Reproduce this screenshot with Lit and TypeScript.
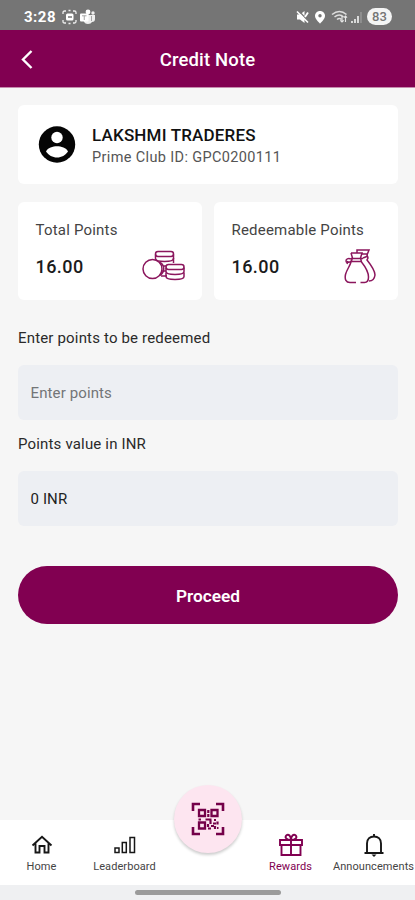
import { LitElement, html, css, svg } from "lit";
import { customElement } from "lit/decorators.js";

const coin = (x: number, y: number, rows: number) => svg`
  <rect x=${x} y=${y} width="18" height="5" rx="2.500"/>
  ${Array.from({ length: rows }, (_, i) => svg`
    <path d="M${x} ${y + 3 + i * 5}v4c0 4 18 4 18 0v-4"/>`)}`;

@customElement("app-root")
export class AppRoot extends LitElement {
  static styles = css`
    :host {
      display: flex;
      flex-direction: column;
      width: 415px;
      height: 900px;
      background: #f6f6f6;
      font-family: Roboto, sans-serif;
      color: #222;
      overflow: hidden;
    }
    * { box-sizing: border-box; }
    svg { display: block; fill: none; flex: none; }
    .status {
      height: 30px;
      flex: none;
      background: #757575;
      color: #fff;
      display: flex;
      align-items: center;
      padding: 3px 23px 0 24px;
    }
    .time { font-size: 15px; font-weight: 700; line-height: 20px; width: 38px; letter-spacing: 0.5px; }
    .right { margin-left: auto; display: flex; align-items: center; }
    .battery {
      width: 25px;
      height: 17px;
      border-radius: 9px;
      background: #f4f4f4;
      color: #757575;
      font-size: 13px;
      font-weight: 500;
      line-height: 18px;
      text-align: center;
      margin-left: 5px;
    }
    .header {
      height: 58px;
      flex: none;
      background: #810051;
      border-bottom: 1px solid #c58bae;
      display: grid;
      grid-template-columns: 60px 1fr 60px;
      align-items: center;
      color: #fff;
    }
    .title { text-align: center; font-size: 18.5px; font-weight: 500; line-height: 24px; padding-top: 3px; letter-spacing: 0.15px; }
    .main { flex: 1; padding: 17px 17px 0 18px; }
    .card { background: #fff; border-radius: 6px; }
    .profile { height: 79px; display: flex; align-items: center; padding-left: 20px; gap: 16px; }
    .identity { padding-top: 3px; }
    .name { font-size: 17px; font-weight: 500; line-height: 22px; color: #111; letter-spacing: 0.18px; }
    .club { font-size: 14.5px; line-height: 22px; color: #555; letter-spacing: 0.36px; position: relative; top: 0.5px; }
    .points { display: grid; grid-template-columns: 184px 184px; justify-content: space-between; margin-top: 18px; }
    .stat { height: 98px; padding: 18px 17px 0 17.5px; }
    .label { font-size: 15px; line-height: 20px; color: #444; letter-spacing: 0.2px; white-space: nowrap; }
    .row { display: flex; justify-content: space-between; align-items: center; height: 34px; margin-top: 10px; }
    .value { font-size: 18px; font-weight: 500; line-height: 24px; letter-spacing: 0.45px; color: #1b1b1b; }
    .field-label { font-size: 15px; line-height: 20px; letter-spacing: 0.17px; color: #2a2a2a; }
    .first { margin-top: 28px; }
    .second { margin-top: 14px; }
    .field {
      height: 55px;
      border-radius: 6px;
      background: #edeff3;
      margin-top: 17px;
      padding: 1px 12px 0 12.5px;
      display: flex;
      align-items: center;
      font-size: 15px;
      letter-spacing: 0.12px;
    }
    .placeholder { color: #737577; }
    .proceed {
      height: 58px;
      border-radius: 29px;
      background: #810051;
      color: #fff;
      display: flex;
      align-items: center;
      justify-content: center;
      margin-top: 40px;
      padding-top: 1px;
      font-size: 17.3px;
      font-weight: 600;
    }
    .nav {
      height: 65px;
      flex: none;
      background: #fff;
      display: grid;
      grid-template-columns: repeat(5, 83px);
      color: #171717;
    }
    .tab { display: flex; flex-direction: column; align-items: center; padding-top: 13px; min-width: 0; }
    .tab-label { font-size: 11px; line-height: 16px; margin-top: 2px; white-space: nowrap; letter-spacing: 0.08px; color: #444; }
    .active { color: #810051; }
    .active .tab-label { color: #810051; }
    .scan {
      width: 68px;
      height: 68px;
      margin: -35px auto 0;
      border-radius: 50%;
      background: #fde5f0;
      box-shadow: 0 2px 3px #0003;
      display: flex;
      align-items: center;
      justify-content: center;
    }
    .gesture { height: 15px; flex: none; background: #eff0f2; padding-top: 5px; }
    .handle { width: 146px; height: 5px; border-radius: 3px; background: #9b9b9b; margin: 0 auto; }
  `;

  render() {
    return html`
      <div class="status">
        <span class="time">3:28</span>
        <svg width="35" height="16" viewBox="0 0 35 16">
          <path d="M1 5V3.500Q1 2 2.500 2H4M11 2h1.500Q14 2 14 3.500V5M14 11v1.500Q14 14 12.500 14H11M4 14H2.500Q1 14 1 12.500V11M6.500 1.500h2M6.500 14.500h2" stroke="#eee" stroke-width="1.300"/>
          <rect x="4" y="4.500" width="7.500" height="7" rx="1.500" fill="#fff"/>
          <path d="M6 8h4" stroke="#757575" stroke-width="1.500"/>
          <circle cx="26" cy="3" r="2.400" fill="#fff"/>
          <circle cx="31" cy="4" r="1.700" fill="#eee"/>
          <path d="M22 6h11v4q0 3-3 3-1 2-4 2-3.500 0-4.500-3.500z" fill="#eee"/>
          <rect x="18" y="4.500" width="8.500" height="8" rx="1" fill="#fff"/>
          <path d="M20 6.800h4.500M22.250 6.800V11M29.500 7v5" stroke="#a5a5a5" stroke-width="1"/>
        </svg>
        <div class="right">
          <svg width="66" height="16" viewBox="0 0 66 16">
            <path d="M1 5.500h3L8.500 2v12L4 10.500H1z" fill="#fff"/>
            <path d="M2 1l11 12" stroke="#757575" stroke-width="1.500"/>
            <path d="M1 2.500l11 11" stroke="#fff" stroke-width="1.600"/>
            <path d="M9 8l3-4.500" stroke="#fff" stroke-width="1.800"/>
            <path d="M24 2c-3 0-5 2.200-5 4.900C19 10 24 14.500 24 14.500S29 10 29 6.900C29 4.200 27 2 24 2z" fill="#fff"/>
            <circle cx="24" cy="6.800" r="1.700" fill="#757575"/>
            <path d="M36 5.500q7.500-6 14.500 0M38.500 8q5-4 9 0M41 10.500q2.500-2 4.500 0" stroke="#ddd" stroke-width="1.600"/>
            <path d="M46 7v6M44.300 11.300L46 13l1.700-1.700M49.500 13V7M47.800 8.700L49.500 7l1.500 1.700" stroke="#e8e8e8" stroke-width="1.100"/>
            <path d="M56 14v-2M59 14v-4M62 14V7" stroke="#e5e5e5" stroke-width="1.800"/>
            <path d="M65 14V3" stroke="#999" stroke-width="1.400"/>
          </svg>
          <div class="battery">83</div>
        </div>
      </div>

      <div class="header">
        <svg width="60" height="28" viewBox="0 0 60 28">
          <path d="M31.500 6L23 14.500l8.500 8.500" stroke="#fff" stroke-width="2.400"/>
        </svg>
        <div class="title">Credit Note</div>
      </div>

      <div class="main">
        <div class="card profile">
          <svg width="38" height="38" viewBox="0 0 38 38">
            <circle cx="19" cy="18.500" r="18.200" fill="#050505"/>
            <circle cx="19" cy="11.500" r="5.700" fill="#fff"/>
            <path d="M8 25.500c1.500-3.800 7-5.300 11-5.300S28.500 21.700 30 25.500c-2.500 3.800-6.500 6-11 6S10.500 29.300 8 25.500z" fill="#fff"/>
          </svg>
          <div class="identity">
            <div class="name">LAKSHMI TRADERES</div>
            <div class="club">Prime Club ID: GPC0200111</div>
          </div>
        </div>

        <div class="points">
          <div class="card stat">
            <div class="label">Total Points</div>
            <div class="row">
              <div class="value">16.00</div>
              <svg width="43" height="34" viewBox="0 0 43 34" stroke="#8b165d" stroke-width="1.500">
                ${coin(13.5, 1.5, 1)}
                <path d="M31.500 8v5"/>
                <circle cx="10.500" cy="19" r="9.500" fill="#fff"/>
                <path d="M18 12.500c5 3 5 9 0 13M21 16h3"/>
                ${coin(24, 14.5, 2)}
                <path d="M20 21h4M19 26h6"/>
              </svg>
            </div>
          </div>
          <div class="card stat">
            <div class="label">Redeemable Points</div>
            <div class="row">
              <div class="value">16.00</div>
              <svg width="37" height="38" viewBox="1 0 37 38" stroke="#8b165d" stroke-width="1.500">
                <path d="M14 5V2h12l-2 5 1 3-1 2c4 5 8 10 8 15-.5 4-3 6-6 6"/>
                <path d="M8 5h11l-1.500 5 1 4c4 5 7 9 7 15 0 4-2 5.500-4 5.500h-4M13 34.500H7c-4 0-5.500-3-4.500-8C3.500 22 7 18 8 14l1.500-4L8 5M8 10.500h12M8 13.500h11M8 11c-3-1-5 0-5 2s3 2 5 0M5 13l-1 3M18 6h7M20 10l5-2"/>
              </svg>
            </div>
          </div>
        </div>

        <div class="field-label first">Enter points to be redeemed</div>
        <div class="field placeholder">Enter points</div>
        <div class="field-label second">Points value in INR</div>
        <div class="field">0 INR</div>
        <div class="proceed">Proceed</div>
      </div>

      <div class="nav">
        <div class="tab">
          <svg width="24" height="24" viewBox="0 0 24 24" stroke="currentColor" stroke-width="1.900">
            <path d="M2.500 12.500L12 3.800l9.500 8.700M5.500 10.500v9h4V13h5v6.500h4v-9"/>
          </svg>
          <div class="tab-label">Home</div>
        </div>
        <div class="tab">
          <svg width="24" height="24" viewBox="0 0 24 24" stroke="currentColor" stroke-width="1.500">
            <rect x="2" y="15" width="4" height="4.500"/>
            <rect x="9.300" y="9.500" width="4" height="10"/>
            <rect x="17" y="4.500" width="4.500" height="15"/>
          </svg>
          <div class="tab-label">Leaderboard</div>
        </div>
        <div>
          <div class="scan">
            <svg width="34" height="34" viewBox="0 0 34 34" stroke="#740049">
              <path d="M2 9V2h7M25 2h7v7M32 25v7h-7M9 32H2v-7" stroke-width="2.600"/>
              <path d="M8 8h6v6H8zM20.500 8h6v6h-6zM8 20.500h6v6H8z" stroke-width="2.300"/>
              <path d="M17.300 8v3M17.300 12v3M14.500 17.500h6M7.500 17.500h2.500M19.500 18v4M23 18h2M26.500 19.500v3M17 22v3M22 21.500h3M20 24h3M17 26.500h3M24 24v3M26 26h1.500" stroke-width="2.200"/>
            </svg>
          </div>
        </div>
        <div class="tab active">
          <svg width="26" height="24" viewBox="0 0 26 24" stroke="currentColor" stroke-width="1.900">
            <path d="M2 7h22v5H2zM3.500 12v10h19V12M13 7v15M13 7C8 7 6.500 4 8.500 2.300S13 3 13 7c0-4 2.500-6.500 4.500-4.700S18 7 13 7z"/>
          </svg>
          <div class="tab-label">Rewards</div>
        </div>
        <div class="tab">
          <svg width="24" height="24" viewBox="0 0 24 24" stroke="currentColor" stroke-width="1.900">
            <path d="M2.500 20h19M5 20V10.500C5 6 8 3.500 12 3.500s7 2.500 7 7V20M12 1v3"/>
            <path d="M9.500 21.500h5L12 24z" fill="currentColor" stroke="none"/>
          </svg>
          <div class="tab-label">Announcements</div>
        </div>
      </div>
      <div class="gesture"><div class="handle"></div></div>
    `;
  }
}
